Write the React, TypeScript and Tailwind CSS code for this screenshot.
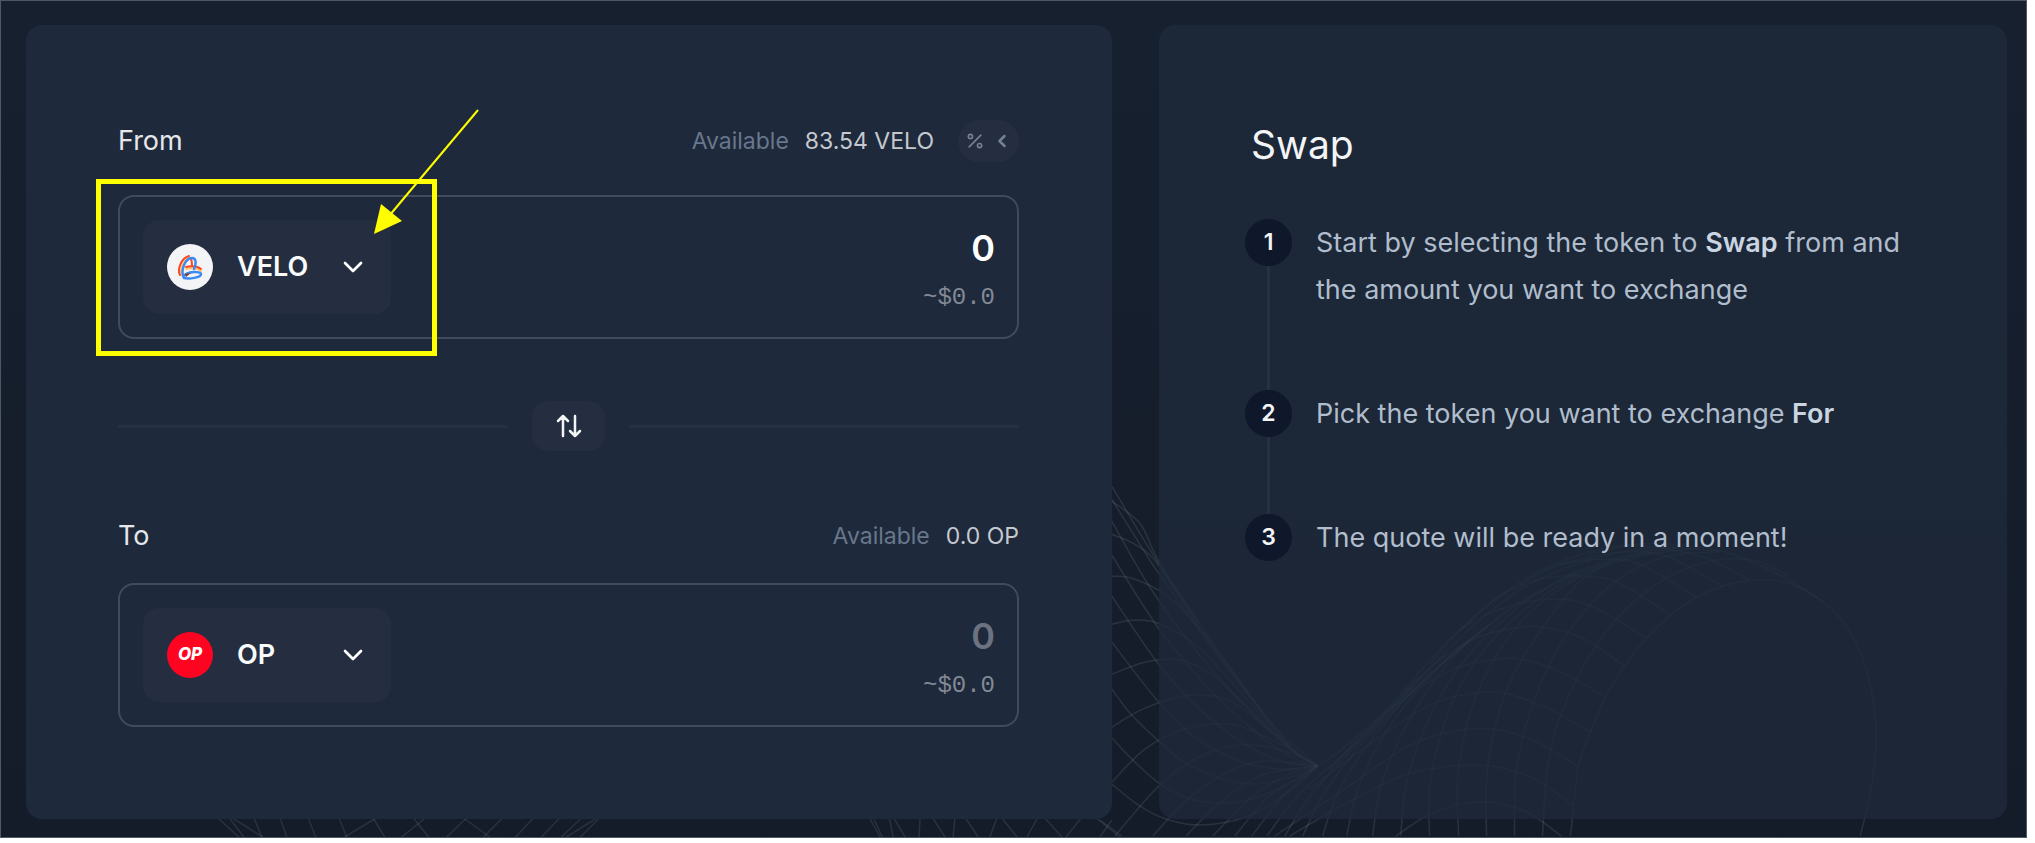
import { useState } from 'react'
import type { ReactNode } from 'react'
import { ChevronDown, ChevronLeft, Percent } from 'lucide-react'

type Point = [number, number]

// descending strands of the left slope, all ending in the fold
const SLOPE: Point[][] = [
  [[1112, 487], [1158, 563], [1215, 647], [1262, 712], [1296, 752], [1318, 767]],
  [[1112, 500], [1140, 545], [1165, 583], [1230, 672], [1275, 728], [1318, 767]],
  [[1112, 522], [1150, 588], [1195, 650], [1250, 712], [1290, 750], [1318, 767]],
  [[1112, 556], [1158, 628], [1205, 685], [1255, 732], [1290, 757], [1318, 767]],
  [[1112, 597], [1158, 664], [1200, 710], [1245, 745], [1285, 763], [1318, 767]],
  [[1112, 643], [1158, 702], [1195, 738], [1240, 762], [1280, 770], [1318, 767]],
  [[1112, 690], [1131, 715], [1160, 743], [1188, 765], [1240, 784], [1285, 780], [1318, 767]],
  [[1112, 739], [1134, 762], [1162, 786], [1195, 801], [1240, 803], [1285, 787], [1318, 767]],
  [[1112, 785], [1137, 805], [1166, 820], [1200, 826], [1246, 818], [1290, 792], [1318, 767]],
  [[1100, 821], [1122, 837]],
]

// arches crossing the left slope
const LEFT_ARCHES: Point[][] = [
  [[1112, 502], [1140, 524], [1158, 560], [1200, 625]],
  [[1112, 535], [1135, 545], [1158, 565], [1200, 630]],
  [[1112, 577], [1132, 579], [1165, 595], [1200, 630], [1262, 712]],
  [[1112, 625], [1133, 621], [1158, 624], [1195, 645], [1240, 692], [1290, 748]],
  [[1112, 675], [1145, 663], [1180, 661], [1210, 674], [1250, 710], [1290, 748]],
  [[1112, 728], [1145, 709], [1190, 696], [1230, 702], [1270, 731], [1300, 757]],
  [[1112, 783], [1145, 750], [1185, 730], [1230, 725], [1275, 742], [1318, 767]],
  [[1115, 837], [1158, 788], [1195, 760], [1240, 746], [1285, 752], [1318, 767]],
  [[1153, 837], [1188, 800], [1225, 775], [1262, 762], [1318, 767]],
  [[1186, 837], [1220, 804], [1262, 776], [1318, 767]],
  [[1213, 837], [1250, 800], [1285, 777], [1318, 767]],
  [[1235, 837], [1270, 797], [1318, 767]],
  [[1252, 837], [1285, 795], [1318, 767]],
]

// long strands of the right hill, from the bottom edge up to the crest
const HILL: Point[][] = [
  [[1318, 767], [1345, 748], [1390, 707], [1450, 640], [1510, 590], [1560, 563], [1610, 548], [1655, 544]],
  [[1267, 837], [1300, 795], [1350, 750], [1410, 690], [1470, 630], [1530, 585], [1600, 558], [1660, 548], [1720, 552]],
  [[1285, 837], [1312, 795], [1355, 748], [1415, 686]],
  [[1303, 837], [1325, 793], [1362, 745], [1415, 690], [1470, 640]],
  [[1323, 837], [1340, 790], [1380, 730], [1430, 675], [1490, 625]],
  [[1347, 837], [1360, 785], [1395, 720], [1440, 668], [1500, 618]],
  [[1373, 837], [1382, 785], [1410, 720], [1452, 660], [1507, 612], [1580, 570]],
  [[1401, 837], [1408, 780], [1433, 712], [1470, 655], [1525, 603], [1590, 567]],
  [[1430, 837], [1431, 780], [1452, 705], [1485, 650], [1535, 603], [1600, 565], [1670, 547]],
  [[1459, 837], [1459, 770], [1478, 693], [1515, 630], [1560, 590], [1614, 562], [1680, 548]],
  [[1487, 837], [1488, 770], [1506, 693], [1540, 633], [1587, 577], [1640, 557], [1700, 549]],
  [[1515, 837], [1517, 770], [1535, 700], [1568, 634], [1615, 583], [1667, 557], [1720, 553]],
  [[1543, 837], [1548, 770], [1562, 714], [1597, 646], [1642, 596], [1695, 566], [1750, 560], [1790, 577]],
  [[1571, 837], [1579, 768], [1591, 733], [1606, 698], [1625, 667], [1647, 639], [1671, 616], [1697, 598], [1723, 587], [1750, 581], [1775, 581], [1800, 588], [1823, 602], [1845, 624], [1862, 655], [1874, 700], [1877, 740], [1872, 790], [1861, 837]],
]

// cross strands of the right hill, each ending on the rim of the opening
const HILL_ARCHES: Point[][] = [
  [[1396, 837], [1435, 813], [1483, 803], [1525, 812], [1562, 837]],
  [[1290, 837], [1340, 808], [1400, 778], [1445, 768], [1490, 767], [1535, 780], [1573, 806]],
  [[1275, 837], [1345, 790], [1405, 749], [1450, 733], [1492, 730], [1538, 743], [1579, 768]],
  [[1310, 790], [1370, 745], [1430, 706], [1470, 695], [1505, 694], [1550, 710], [1591, 733]],
  [[1330, 770], [1390, 710], [1450, 672], [1490, 661], [1520, 660], [1562, 673], [1606, 698]],
  [[1400, 697], [1440, 661], [1478, 638], [1515, 629], [1545, 628], [1585, 640], [1625, 667]],
  [[1430, 665], [1466, 627], [1510, 607], [1550, 600], [1590, 606], [1647, 639]],
  [[1460, 632], [1500, 597], [1545, 579], [1587, 577], [1620, 584], [1671, 616]],
  [[1520, 585], [1560, 566], [1600, 560], [1640, 565], [1697, 598]],
  [[1560, 565], [1620, 553], [1667, 557], [1723, 587]],
  [[1590, 555], [1630, 547], [1670, 550], [1710, 560], [1750, 581]],
  [[1655, 544], [1720, 551], [1775, 573], [1823, 602]],
]

// tips of the mesh that show below the swap form
const TIPS: Point[][] = [
  [[216, 818], [238, 838]], [[228, 818], [243, 838]], [[230, 818], [262, 838]], [[253, 818], [261, 838]],
  [[279, 818], [286, 838]], [[307, 818], [315, 838]], [[338, 818], [346, 838]], [[372, 818], [384, 838]],
  [[377, 818], [344, 838]], [[412, 818], [428, 838]], [[426, 818], [401, 838]], [[463, 819], [489, 838]],
  [[466, 819], [446, 838]], [[503, 818], [483, 838]], [[534, 818], [515, 838]], [[560, 818], [541, 838]],
  [[582, 818], [561, 838]], [[598, 818], [566, 838]], [[600, 818], [580, 838]], [[869, 818], [880, 838]],
  [[873, 818], [882, 838]], [[889, 818], [893, 838]], [[893, 818], [905, 838]], [[920, 818], [919, 838]],
  [[932, 818], [945, 838]], [[955, 818], [953, 838]], [[965, 818], [978, 838]], [[997, 818], [990, 838]],
  [[1001, 818], [1017, 838]], [[1038, 818], [1027, 838]], [[1044, 818], [1062, 838]], [[1082, 818], [1066, 838]],
  [[1095, 818], [1120, 838]], [[1112, 821], [1100, 838]],
]

const MESH = [...SLOPE, ...LEFT_ARCHES, ...HILL, ...HILL_ARCHES, ...TIPS]

function smooth(pts: Point[]): string {
  let d = `M${pts[0][0]} ${pts[0][1]}`
  for (let i = 0; i < pts.length - 1; i++) {
    const a = pts[i - 1] ?? pts[i]
    const b = pts[i]
    const c = pts[i + 1]
    const e = pts[i + 2] ?? c
    d += `C${b[0] + (c[0] - a[0]) / 6} ${b[1] + (c[1] - a[1]) / 6} ${c[0] - (e[0] - b[0]) / 6} ${c[1] - (e[1] - b[1]) / 6} ${c[0]} ${c[1]}`
  }
  return d
}

function Mesh() {
  return (
    <svg
      viewBox="0 0 2027 838"
      preserveAspectRatio="xMaxYMax slice"
      className="absolute inset-0 h-full w-full"
      fill="none"
      stroke="#9ca3af"
      strokeOpacity="0.16"
      strokeWidth="1.5"
      aria-hidden="true"
    >
      {MESH.map((pts, i) => (
        <path key={i} d={smooth(pts)} />
      ))}
    </svg>
  )
}

function VeloIcon() {
  return (
    <svg viewBox="0 0 46 46" className="size-[46px] shrink-0" fill="none" strokeLinecap="round" aria-hidden="true">
      <circle cx="23" cy="23" r="23" fill="#f3f4f6" />
      <path d="M15 31C12 27 16 15 23 14" stroke="#ffc46b" strokeWidth="2" />
      <path d="M13 31C10 26 14 14 22 12" stroke="#ff4422" strokeWidth="2" />
      <path d="M23 14C25 15 25 18 25 22" stroke="#ff4422" strokeWidth="2" />
      <path d="M19 25C24 24 30 24 34 27" stroke="#ffc46b" strokeWidth="2" />
      <path d="M19 23C24 22 30 22 34 25" stroke="#ff4422" strokeWidth="2" />
      <path d="M17 34C13 27 18 14 25 14C30 14 29 21 27 25" stroke="#3b8bf5" strokeWidth="2.5" />
      <path d="M17 32C20 27 34 27 34 30C34 34 22 35 17 34" stroke="#3b8bf5" strokeWidth="2.5" />
      <path d="M18 30L24 29L19 33Z" fill="#8a3b24" />
    </svg>
  )
}

function OpIcon() {
  return (
    <span className="flex size-[46px] shrink-0 items-center justify-center rounded-full bg-[#ff0420] text-[17px] font-extrabold text-white italic">
      OP
    </span>
  )
}

type FieldProps = {
  id: string
  label: string
  token: string
  icon: ReactNode
  balance: string
  readOnly?: boolean
  extra?: ReactNode
  children?: ReactNode
}

function TokenField({ id, label, token, icon, balance, readOnly, extra, children }: FieldProps) {
  const [amount, setAmount] = useState('0')

  return (
    <div className="flex flex-col gap-[33px]">
      <div className="flex items-center justify-between leading-7">
        <label htmlFor={id} className="text-[27px] text-gray-200">
          {label}
        </label>
        <div className="flex items-center gap-4 text-[23px]">
          <span className="text-[#68778c]">Available</span>
          <span className="text-[#c5c9cf]">{balance}</span>
          {extra}
        </div>
      </div>

      <div className="relative flex items-center justify-between rounded-2xl border-2 border-[#3f4c5e] py-[23px] pr-[22px] pl-[23px]">
        <button type="button" className="flex h-[94px] w-[248px] items-center rounded-2xl bg-[#242e40] pr-[22px] pl-6">
          {icon}
          <span className="ml-6 text-[27px] font-semibold text-gray-50">{token}</span>
          <ChevronDown className="ml-auto size-8 text-white" strokeWidth={2} />
        </button>
        <div className="flex min-w-0 flex-1 flex-col items-end pt-1">
          <input
            id={id}
            value={amount}
            readOnly={readOnly}
            onChange={(e) => setAmount(e.target.value)}
            className="h-12 w-full bg-transparent text-right text-4xl font-semibold text-white outline-none read-only:text-[#6b7280]"
          />
          <span className="mt-2.5 font-['Liberation_Mono',monospace] text-2xl leading-8 text-[#838a96]">~$0.0</span>
        </div>
        {children}
      </div>
    </div>
  )
}

function Callout() {
  return (
    <>
      <div className="pointer-events-none absolute -top-[18px] -left-6 h-[177px] w-[341px] border-[5px] border-[#ffff00]" />
      <svg
        viewBox="0 0 106 126"
        className="pointer-events-none absolute -top-[88px] left-[253px] h-[126px] w-[106px]"
        aria-hidden="true"
      >
        <path d="M105 1L16 107" stroke="#ffff00" strokeWidth="2" />
        <path d="M1 125L8 95L29 112Z" fill="#ffff00" />
      </svg>
    </>
  )
}

const STEPS: ReactNode[] = [
  <>
    Start by selecting the token to <strong className="font-semibold text-slate-300">Swap</strong> from and the amount you
    want to exchange
  </>,
  <>
    Pick the token you want to exchange <strong className="font-semibold text-slate-300">For</strong>
  </>,
  <>The quote will be ready in a moment!</>,
]

function Steps() {
  return (
    <ol>
      {STEPS.map((step, i) => (
        <li key={i} className="group flex gap-6">
          <div className="flex flex-col items-center">
            <span className="flex size-[47px] items-center justify-center rounded-full bg-[#0f172a] text-[23px] font-semibold text-gray-100">
              {i + 1}
            </span>
            <span className="w-[3px] flex-1 bg-[#253142]" />
          </div>
          <p className="flex-1 pb-[77px] text-[27px] leading-[47px] text-[#b0bdcc] group-last:pb-0">{step}</p>
        </li>
      ))}
    </ol>
  )
}

export default function App() {
  return (
    <div className="bg-white pr-2 pb-[5px] font-['Inter',sans-serif]">
      <main className="relative grid grid-cols-[1086fr_848fr] gap-[47px] border border-[#4f5963] bg-linear-to-b from-[#16202f] to-[#151c29] pt-6 pr-[19px] pb-[18px] pl-[25px]">
        <Mesh />

        <form className="relative rounded-2xl bg-[#1e293b] pt-[95px] pr-[93px] pb-[92px] pl-[92px]">
          <TokenField
            id="from-amount"
            label="From"
            token="VELO"
            icon={<VeloIcon />}
            balance="83.54 VELO"
            extra={
              <button
                type="button"
                aria-label="Percentage"
                className="ml-2 flex h-[42px] w-[61px] items-center justify-between rounded-full bg-[#242e40] px-[7px] text-[#748194]"
              >
                <Percent className="size-5" />
                <ChevronLeft className="size-5" strokeWidth={3} />
              </button>
            }
          >
            <Callout />
          </TokenField>

          <div className="mt-[62px] mb-[71px] flex items-center gap-6">
            <span className="h-[3px] flex-1 bg-[#253042]" />
            <button
              type="button"
              aria-label="Switch tokens"
              className="flex h-[50px] w-[73px] items-center justify-center rounded-2xl bg-[#242e40]"
            >
              <svg
                viewBox="0 0 26 26"
                className="size-[26px]"
                fill="none"
                stroke="#f3f4f6"
                strokeWidth="2.5"
                strokeLinecap="round"
                strokeLinejoin="round"
                aria-hidden="true"
              >
                <path d="M7 23V3M2 8L7 3L12 8M19 3V23M14 18L19 23L24 18" />
              </svg>
            </button>
            <span className="h-[3px] flex-1 bg-[#253042]" />
          </div>

          <TokenField id="to-amount" label="To" token="OP" icon={<OpIcon />} balance="0.0 OP" readOnly />
        </form>

        <section className="relative rounded-2xl bg-[#1e293b]/80 pt-24 pr-[86px] pl-[86px]">
          <h1 className="mb-[50px] ml-1.5 text-[39px] leading-[48px] text-gray-100">Swap</h1>
          <Steps />
        </section>
      </main>
    </div>
  )
}
